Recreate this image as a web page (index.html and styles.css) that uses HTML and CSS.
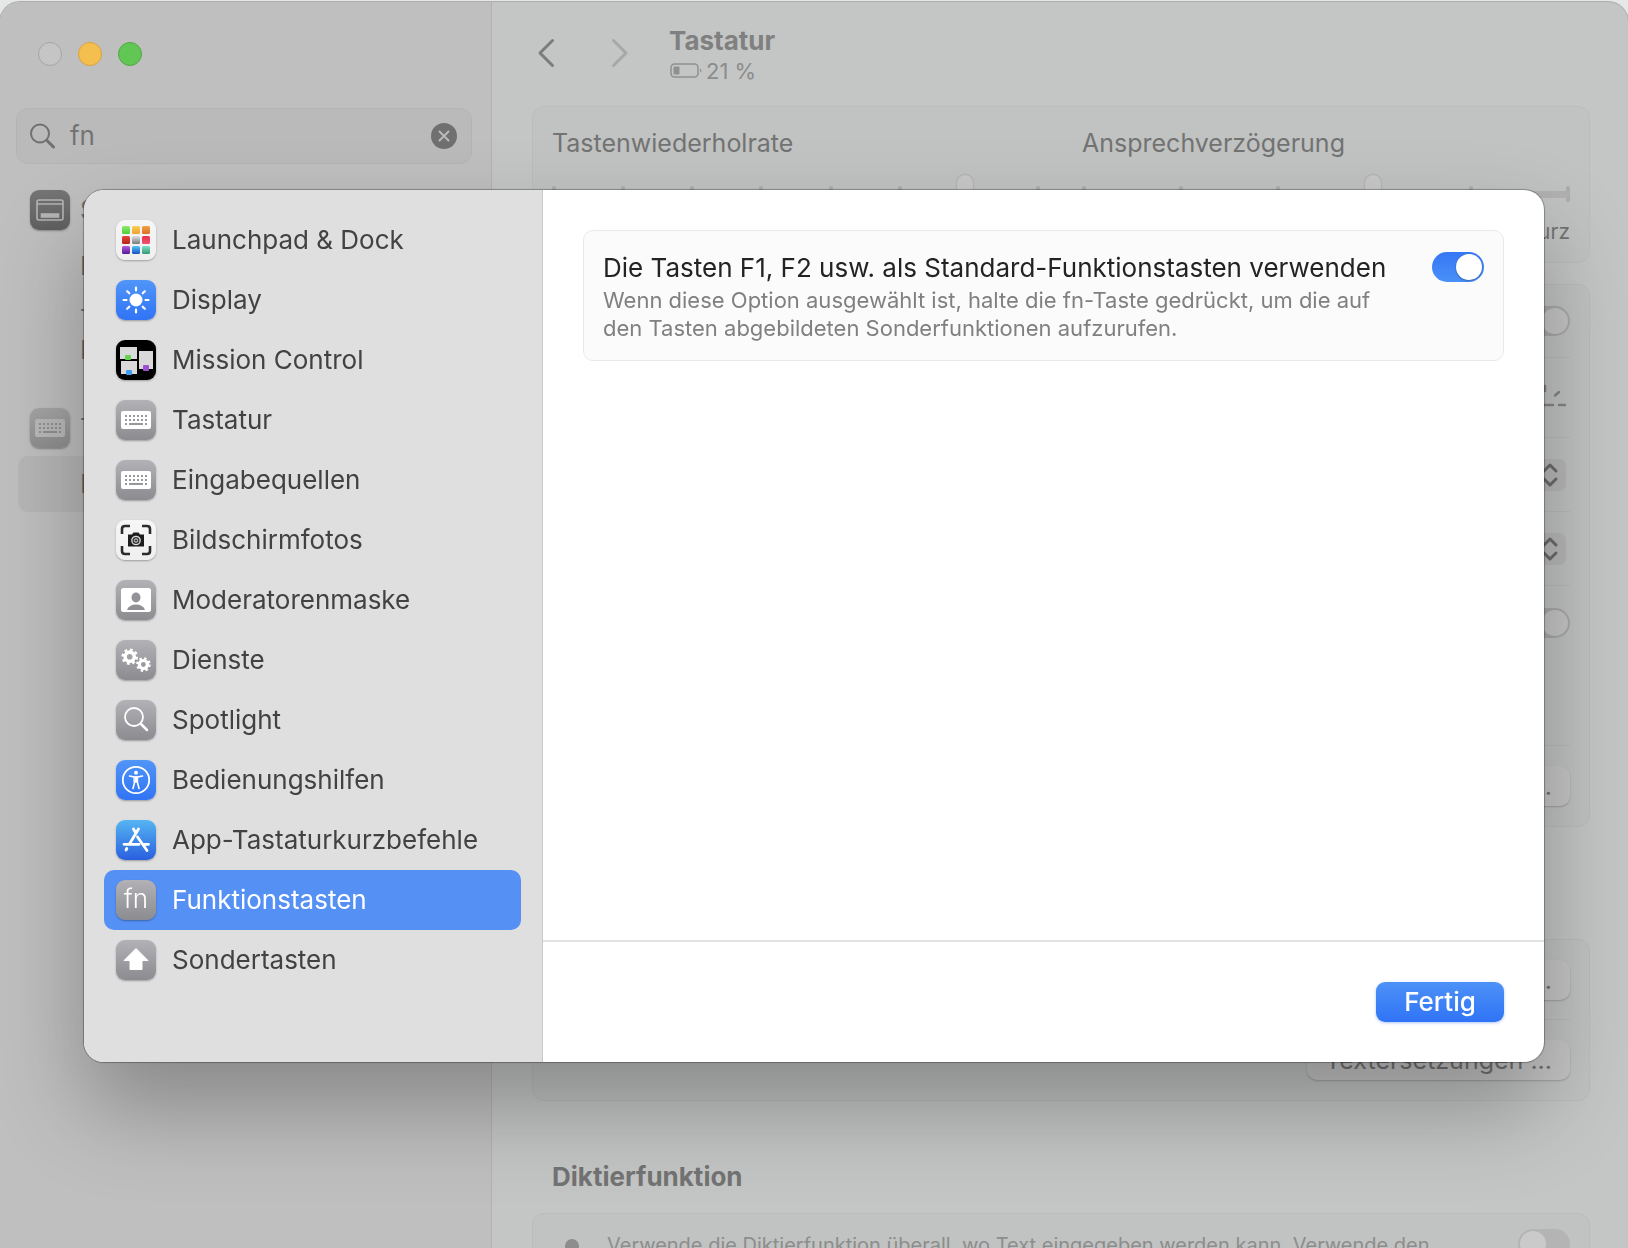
FILE: index.html
```html
<!DOCTYPE html>
<html lang="de">
<head>
    <meta charset="UTF-8">
    <meta name="viewport" content="width=device-width, initial-scale=1.0">
    <title>Tastatur</title>
    <link rel="stylesheet" href="styles.css">
</head>
<body>
    <div class="window">
        <!-- Seitenleiste -->
        <aside class="sidebar">
            <div class="lights">
                <button class="light" aria-label="Schließen"></button>
                <button class="light yellow" aria-label="Minimieren"></button>
                <button class="light green" aria-label="Vollbild"></button>
            </div>
            <div class="search">
                <svg width="26" height="26" viewBox="0 0 26 26" fill="none" stroke="#707070" stroke-width="2" stroke-linecap="round"><circle cx="10" cy="10.500" r="9"/><path d="M17 17.500L23.500 24" stroke-width="3"/></svg>
                <input type="text" value="fn" aria-label="Suchen">
                <button class="clear" aria-label="Suche löschen">
                    <svg width="26" height="26" viewBox="0 0 26 26"><circle cx="13" cy="13" r="13" fill="#707070"/><path d="M8.500 8.500L17.500 17.500M17.500 8.500L8.500 17.500" stroke="#bababa" stroke-width="2" stroke-linecap="round"/></svg>
                </button>
            </div>
            <nav class="results">
                <a class="result" href="#">
                    <span class="tile dark"><svg viewBox="0 0 40 40" fill="none" stroke="#b5b5b5" stroke-width="1.600"><rect x="7" y="10" width="26" height="20" rx="2"/><path d="M7 14H33"/><rect x="11.500" y="24" width="17" height="3" fill="#b5b5b5"/></svg></span>
                    Schreibtisch &amp; Dock
                </a>
                <a class="result sub" href="#">Launchpad öffnen</a>
                <a class="result sub two" href="#">Titelleiste eines<br>Fensters doppelklicken</a>
                <a class="result group" href="#">
                    <span class="tile dim"><svg viewBox="0 0 40 40"><rect x="5" y="11" width="30" height="18" rx="2" fill="#b9b9b9"/><path d="M9 16H32M9 20H32" stroke="#8f8f90" stroke-width="2" stroke-dasharray="2 2"/><path d="M9 24H11M13 24H27M29 24H31" stroke="#8f8f90" stroke-width="2"/></svg></span>
                    Tastatur
                </a>
                <a class="result sub current" href="#">Funktionstasten</a>
            </nav>
        </aside>

        <!-- Einstellungen Tastatur -->
        <main class="content">
            <header class="toolbar">
                <button class="nav" aria-label="Zurück"><svg width="18" height="30" viewBox="0 0 18 30" fill="none" stroke="#7c7c7c" stroke-width="3" stroke-linecap="round" stroke-linejoin="round"><path d="M15.500 2.500L3 15L15.500 27.500"/></svg></button>
                <button class="nav" aria-label="Vorwärts"><svg width="18" height="30" viewBox="0 0 18 30" fill="none" stroke="#a6a7a6" stroke-width="3" stroke-linecap="round" stroke-linejoin="round"><path d="M2.500 2.500L15 15L2.500 27.500"/></svg></button>
                <div class="heading">
                    <h1>Tastatur</h1>
                    <p><svg width="34" height="16" viewBox="0 0 34 16"><rect x="1" y="1" width="27" height="13" rx="3.500" fill="none" stroke="#8f908f" stroke-width="1.500"/><rect x="3.500" y="3.500" width="6" height="8" rx="1" fill="#8f908f"/><path d="M30 5.500Q33 7.500 30 9.500Z" fill="#8f908f"/></svg>21 %</p>
                </div>
            </header>

            <section class="card sliders">
                <div class="slider">
                    <label for="repeat">Tastenwiederholrate</label>
                    <div class="track">
                        <div class="ticks"><i></i><i></i><i></i><i></i><i></i><i></i><i></i><i></i></div>
                        <input type="range" id="repeat" min="0" max="7" value="6">
                    </div>
                    <div class="ends"><span>Langsam</span><span>Schnell</span></div>
                </div>
                <div class="slider">
                    <label for="delay">Ansprechverzögerung</label>
                    <div class="track">
                        <div class="ticks"><i></i><i></i><i></i><i></i><i></i><i></i></div>
                        <input type="range" id="delay" min="0" max="5" value="3">
                    </div>
                    <div class="ends"><span>Lang</span><span>Kurz</span></div>
                </div>
            </section>

            <section class="card options">
                <div class="row">
                    <label for="auto">Tastaturhelligkeit anpassen</label>
                    <input type="checkbox" class="switch off" id="auto">
                </div>
                <div class="row tall">
                    <span>Tastaturhelligkeit</span>
                    <svg class="glow" width="40" height="32" viewBox="0 0 40 32" stroke="#858685" stroke-width="2.500" stroke-linecap="round"><path d="M3 23H10M13 23H23M29 23H35M15 4V9M5 10L8 13M29 10L25 13.500"/></svg>
                </div>
                <div class="row">
                    <label for="inactive">Bei Inaktivität ausschalten</label>
                    <span class="popup"><select id="inactive"><option>Nie</option></select><svg viewBox="0 0 32 32" fill="none" stroke="#6c6c6c" stroke-width="3" stroke-linecap="round" stroke-linejoin="round"><path d="M10 12L16 6L22 12M10 20L16 26L22 20"/></svg></span>
                </div>
                <div class="row">
                    <label for="globe">Drücken der fn-Taste</label>
                    <span class="popup"><select id="globe"><option>Keine Aktion</option></select><svg viewBox="0 0 32 32" fill="none" stroke="#6c6c6c" stroke-width="3" stroke-linecap="round" stroke-linejoin="round"><path d="M10 12L16 6L22 12M10 20L16 26L22 20"/></svg></span>
                </div>
                <div class="row double">
                    <label for="tabnav">Tastaturnavigation</label>
                    <input type="checkbox" class="switch off" id="tabnav">
                </div>
                <div class="row tall">
                    <span></span>
                    <button class="plain">Tastaturkurzbefehle ...</button>
                </div>
            </section>

            <h2>Texteingabe</h2>
            <section class="card options">
                <div class="row tall">
                    <span>Eingabequellen</span>
                    <button class="plain">Bearbeiten ...</button>
                </div>
                <div class="row tall">
                    <span></span>
                    <button class="plain">Textersetzungen ...</button>
                </div>
            </section>

            <h2>Diktierfunktion</h2>
            <section class="card dictation">
                <svg width="40" height="44" viewBox="0 0 40 44"><rect x="13" y="10" width="14" height="24" rx="7" fill="#8c8d8c"/></svg>
                <label for="dictation">Verwende die Diktierfunktion überall, wo Text eingegeben werden kann. Verwende den</label>
                <input type="checkbox" class="switch off" id="dictation">
            </section>
        </main>
    </div>

    <!-- Dialog Kurzbefehle -->
    <div class="dialog" role="dialog" aria-label="Tastaturkurzbefehle">
        <nav class="list">
            <a class="item" href="#">
                <span class="tile white"><svg viewBox="0 0 40 40">
                    <defs>
                        <linearGradient id="g1" x2="0" y2="1"><stop stop-color="#8eea70"/><stop offset="1" stop-color="#52cc35"/></linearGradient>
                        <linearGradient id="g2" x2="0" y2="1"><stop stop-color="#f9d052"/><stop offset="1" stop-color="#eda22e"/></linearGradient>
                        <linearGradient id="g3" x2="0" y2="1"><stop stop-color="#f1a445"/><stop offset="1" stop-color="#dc6e25"/></linearGradient>
                        <linearGradient id="g4" x2="0" y2="1"><stop stop-color="#e6453a"/><stop offset="1" stop-color="#b6241c"/></linearGradient>
                        <linearGradient id="g5" x2="0" y2="1"><stop stop-color="#dde2e6"/><stop offset="1" stop-color="#777a7d"/></linearGradient>
                        <linearGradient id="g6" x2="0" y2="1"><stop stop-color="#e9304e"/><stop offset="1" stop-color="#ef5470"/></linearGradient>
                        <linearGradient id="g7" x2="0" y2="1"><stop stop-color="#b45be0"/><stop offset="1" stop-color="#551a96"/></linearGradient>
                        <linearGradient id="g8" x2="0" y2="1"><stop stop-color="#4fc8fa"/><stop offset="1" stop-color="#1a4fc0"/></linearGradient>
                        <linearGradient id="g9" x2="0" y2="1"><stop stop-color="#79e3c6"/><stop offset="1" stop-color="#399878"/></linearGradient>
                    </defs>
                    <rect x="6" y="6" width="8" height="8" rx="1.500" fill="url(#g1)"/><rect x="16" y="6" width="8" height="8" rx="1.500" fill="url(#g2)"/><rect x="26" y="6" width="8" height="8" rx="1.500" fill="url(#g3)"/>
                    <rect x="6" y="16" width="8" height="8" rx="1.500" fill="url(#g4)"/><rect x="16" y="16" width="8" height="8" rx="1.500" fill="url(#g5)"/><rect x="26" y="16" width="8" height="8" rx="1.500" fill="url(#g6)"/>
                    <rect x="6" y="26" width="8" height="8" rx="1.500" fill="url(#g7)"/><rect x="16" y="26" width="8" height="8" rx="1.500" fill="url(#g8)"/><rect x="26" y="26" width="8" height="8" rx="1.500" fill="url(#g9)"/>
                </svg></span>
                Launchpad &amp; Dock
            </a>
            <a class="item" href="#">
                <span class="tile blue"><svg viewBox="0 0 40 40"><circle cx="20" cy="20" r="6.500" fill="#fff"/><path d="M20 7.500V10.500M20 29.500V32.500M7.500 20H10.500M29.500 20H32.500M11.200 11.200L13.300 13.300M26.700 26.700L28.800 28.800M28.800 11.200L26.700 13.300M13.300 26.700L11.200 28.800" stroke="#fff" stroke-width="2.200" stroke-linecap="round"/></svg></span>
                Display
            </a>
            <a class="item" href="#">
                <span class="tile black"><svg viewBox="0 0 40 40"><rect x="4" y="7" width="17" height="12" fill="#d9d9d9"/><rect x="5" y="21" width="16" height="13" fill="#d9d9d9"/><rect x="23" y="11" width="14" height="18" fill="#d9d9d9"/><rect x="9" y="15" width="6" height="5" rx="1" fill="#63d44b"/><rect x="10" y="30" width="6" height="5" rx="1" fill="#3f9cf0"/><rect x="27" y="25" width="6" height="6" rx="1" fill="#9a50d0"/></svg></span>
                Mission Control
            </a>
            <a class="item" href="#">
                <span class="tile"><svg viewBox="0 0 40 40"><rect x="5" y="11" width="30" height="18" rx="2" fill="#fff"/><path d="M9 16H32M9 20H32" stroke="#99999d" stroke-width="2" stroke-dasharray="2 2"/><path d="M9 24H11M13 24H27M29 24H31" stroke="#99999d" stroke-width="2"/></svg></span>
                Tastatur
            </a>
            <a class="item" href="#">
                <span class="tile"><svg viewBox="0 0 40 40"><rect x="5" y="11" width="30" height="18" rx="2" fill="#fff"/><path d="M9 16H32M9 20H32" stroke="#99999d" stroke-width="2" stroke-dasharray="2 2"/><path d="M9 24H11M13 24H27M29 24H31" stroke="#99999d" stroke-width="2"/></svg></span>
                Eingabequellen
            </a>
            <a class="item" href="#">
                <span class="tile white"><svg viewBox="0 0 40 40"><path d="M6 14V9Q6 6 9 6H14M26 6H31Q34 6 34 9V14M34 26V31Q34 34 31 34H26M14 34H9Q6 34 6 31V26" fill="none" stroke="#2b2b2b" stroke-width="2.600"/><path d="M12 14.500H16L17.500 12.500H22.500L24 14.500H28V26.500H12Z" fill="#1c1c1c"/><circle cx="20" cy="20.500" r="4.200" fill="#333" stroke="#ddd" stroke-width="1.300"/><circle cx="20" cy="20.500" r="1.700" fill="none" stroke="#ddd"/></svg></span>
                Bildschirmfotos
            </a>
            <a class="item" href="#">
                <span class="tile"><svg viewBox="0 0 40 40"><rect x="5" y="8" width="30" height="24" rx="2.500" fill="#fff"/><ellipse cx="20" cy="17.500" rx="4.500" ry="5" fill="#939397"/><path d="M11 30Q13 24.500 20 24.500T29 30Z" fill="#919195"/></svg></span>
                Moderatorenmaske
            </a>
            <a class="item" href="#">
                <span class="tile"><svg viewBox="0 0 40 40" fill="none" stroke="#fff"><circle cx="13.700" cy="16.700" r="4.600" stroke-width="3.600"/><circle cx="13.700" cy="16.700" r="7" stroke-width="2.600" stroke-dasharray="2.750 2.750"/><circle cx="27.400" cy="24.500" r="4" stroke-width="3.200"/><circle cx="27.400" cy="24.500" r="6.100" stroke-width="2.400" stroke-dasharray="2.400 2.390"/></svg></span>
                Dienste
            </a>
            <a class="item" href="#">
                <span class="tile"><svg viewBox="0 0 40 40" fill="none" stroke="#fff" stroke-linecap="round"><circle cx="18" cy="17" r="9" stroke-width="1.800"/><path d="M25 24L31 30" stroke-width="2.500"/></svg></span>
                Spotlight
            </a>
            <a class="item" href="#">
                <span class="tile blue"><svg viewBox="0 0 40 40" fill="none" stroke="#fff" stroke-linecap="round" stroke-linejoin="round"><circle cx="20" cy="20" r="13.200" stroke-width="1.800"/><circle cx="20" cy="12.800" r="2" fill="#fff" stroke="none"/><path d="M13.500 16L18.500 17H21.500L26.500 16" stroke-width="1.600"/><path d="M18.300 17H21.700V22H18.300Z" fill="#fff" stroke-width="1"/><path d="M18.800 21.500L17 28.500M21.200 21.500L23 28.500" stroke-width="1.600"/></svg></span>
                Bedienungshilfen
            </a>
            <a class="item" href="#">
                <span class="tile store"><svg viewBox="0 0 40 40" fill="none" stroke="#fff" stroke-width="2.800" stroke-linecap="round"><path d="M22.500 9L13.500 24M17.500 9L19.500 12.500M21.500 17L31 30.500M8 24.300H23M28.500 24.300H32.500M10.800 28.500L10 30"/></svg></span>
                App-Tastaturkurzbefehle
            </a>
            <a class="item selected" href="#">
                <span class="tile fn">fn</span>
                Funktionstasten
            </a>
            <a class="item" href="#">
                <span class="tile"><svg viewBox="0 0 40 40"><path d="M20 8.500L32 20.500H26V29.500H14V20.500H8Z" fill="#fff" stroke="#fff" stroke-linejoin="round"/></svg></span>
                Sondertasten
            </a>
        </nav>
        <div class="pane">
            <div class="pane-body">
                <div class="setting">
                    <div class="setting-text">
                        <label for="fkeys">Die Tasten F1, F2 usw. als Standard-Funktionstasten verwenden</label>
                        <p>Wenn diese Option ausgewählt ist, halte die fn-Taste gedrückt, um die auf den Tasten abgebildeten Sonderfunktionen aufzurufen.</p>
                    </div>
                    <input type="checkbox" class="switch" id="fkeys" checked>
                </div>
            </div>
            <footer class="pane-footer">
                <button class="primary">Fertig</button>
            </footer>
        </div>
    </div>
</body>
</html>
```

FILE: styles.css
```css
* { box-sizing: border-box; }
body { margin: 0; padding-top: 2px; height: 100vh; overflow: hidden; background: #e6e8e7; font-family: Inter, "Liberation Sans", sans-serif; font-size: 25px; line-height: 32px; color: #737373; }
h1, h2, p { margin: 0; }
a { color: inherit; text-decoration: none; }
button, input, select { font: inherit; color: inherit; border: 0; margin: 0; padding: 0; background: none; }
svg { display: block; flex: none; }

.window { display: flex; height: 100%; overflow: hidden; border-radius: 20px 20px 0 0; background: #c4c6c5; box-shadow: 0 0 0 1px #adadad; }

/* Seitenleiste */
.sidebar { flex: none; width: 492px; padding: 40px 19px 0 16px; background: #bfbfbf; border-right: 1px solid #b2b2b2; }
.lights { display: flex; gap: 16px; padding-left: 22px; }
.light { width: 24px; height: 24px; border-radius: 50%; background: #c5c5c5; border: 1px solid #a5a5a5; }
.light.yellow { background: #f5bf4f; border-color: #d9a23d; }
.light.green { background: #62c655; border-color: #4fa944; }
.search { display: flex; align-items: center; gap: 14px; height: 56px; margin-top: 42px; padding: 0 14px 0 13px; border: 1px solid #b4b4b4; border-radius: 12px; background: #bababa; }
.search input { flex: 1; min-width: 0; outline: 0; font-size: 26px; }
.results { display: flex; flex-direction: column; padding: 18px 0 0 2px; white-space: nowrap; }
.result { display: flex; align-items: center; gap: 10px; height: 56px; padding-left: 12px; }
.result.sub { padding-left: 62px; }
.result.two { height: 82px; line-height: 31px; }
.result.group { margin-top: 24px; }
.result.current { border-radius: 10px; background: #b6b6b6; }

.tile { flex: none; width: 40px; height: 40px; border-radius: 9px; background: linear-gradient(#b1b1b6, #8b8b90); box-shadow: 0 1px 2px rgba(0, 0, 0, 0.3); }
.tile.dark { background: linear-gradient(#757575, #606060); }
.tile.dim { background: linear-gradient(#a5a5a5, #8e8e8f); }
.tile.white { background: linear-gradient(#f6f6f6, #efefef); }
.tile.blue { background: linear-gradient(#5095f7, #3074f6); }
.tile.black { background: #000; }
.tile.store { background: linear-gradient(#55b5f2, #2a5fe0); }
.tile.fn { color: #fff; font-weight: 300; line-height: 38px; text-align: center; }

/* Hauptbereich */
.content { flex: 1; min-width: 0; padding: 0 38px 0 40px; }
.toolbar { display: flex; align-items: flex-start; height: 104px; padding: 23px 0 0 5px; }
.nav { width: 74px; height: 56px; }
.heading { margin-left: -16px; }
.heading h1 { color: #808080; font-size: 26px; line-height: 32px; }
.heading p { display: flex; align-items: center; gap: 2px; color: #8b8c8b; font-size: 22px; line-height: 28px; }
.heading p svg { margin-left: 1px; }
.content h2 { margin: 60px 20px 20px; font-size: 26px; line-height: 32px; }
.card { border: 1px solid #bbbcbb; border-radius: 12px; background: #c1c3c2; }
.card + .card { margin-top: 21px; }
.sliders { display: grid; grid-template-columns: 1fr 1fr; gap: 42px; padding: 20px 19px 16px; }
.slider label { display: block; }
.track { position: relative; height: 42px; margin: 14px 0 3px; }
.ticks { position: absolute; inset: 13px 0; display: flex; justify-content: space-between; }
.ticks i { width: 4px; border-radius: 2px; background: #acacac; }
.track input { position: absolute; inset: 0; width: 100%; height: 42px; appearance: none; }
.track input::-webkit-slider-runnable-track { height: 7px; border-radius: 4px; background: #b1b1b1; }
.track input::-webkit-slider-thumb { appearance: none; width: 16px; height: 40px; margin-top: -16px; border-radius: 8px; background: #c8c8c8; box-shadow: 0 0 2px rgba(0, 0, 0, 0.25); }
.ends { display: flex; justify-content: space-between; font-size: 21px; line-height: 28px; }

.options { padding: 0 19px; }
.row { display: flex; align-items: center; justify-content: space-between; height: 74px; border-bottom: 1px solid #b9bab9; }
.row:first-child { height: 73px; }
.row.tall { height: 80px; }
.row.double { height: 160px; align-items: flex-start; padding-top: 22px; }
.row:last-child { border-bottom: 0; }
.popup { position: relative; margin-right: 4px; }
.popup select { height: 32px; padding-right: 40px; appearance: none; }
.popup svg { position: absolute; right: 0; top: 0; width: 32px; height: 32px; border-radius: 7px; background: #b8b8b8; }
.plain { height: 40px; padding: 0 18px; border-radius: 10px; background: #c6c6c6; box-shadow: 0 1px 2px rgba(0, 0, 0, 0.2); }
.dictation { display: flex; align-items: flex-start; height: 100px; padding: 15px 19px; font-size: 20px; color: #8c8d8c; white-space: nowrap; }
.dictation label { flex: 1; min-width: 0; padding-left: 15px; }

.switch { flex: none; width: 52px; height: 30px; padding: 2px; border-radius: 15px; appearance: none; background: linear-gradient(#3577f5, #4a90f8); }
.switch::before { content: ""; display: block; width: 26px; height: 26px; margin-left: auto; border-radius: 50%; background: #fff; box-shadow: 0 1px 2px rgba(0, 0, 0, 0.3); }
.switch.off { background: #a9a9a9; }
.switch.off::before { background: #c6c6c6; box-shadow: none; }
.dictation .switch { background: #b3b4b3; }
.dictation .switch::before { margin-left: 0; background: #cacaca; }

/* Dialog */
.dialog { position: fixed; inset: 190px 84px 186px; display: flex; overflow: hidden; border-radius: 20px; background: #fff; box-shadow: 0 0 1px 1px rgba(0, 0, 0, 0.3), 0 46px 90px rgba(0, 0, 0, 0.29); font-size: 26px; }
.list { flex: none; width: 459px; padding: 20px 21px 20px 20px; background: #dfdfdf; border-right: 1px solid #c9c9c9; color: #424242; }
.item { display: flex; align-items: center; gap: 16px; height: 60px; padding-left: 12px; border-radius: 10px; }
.item.selected { background: #5590f5; color: #fff; }
.pane { flex: 1; display: flex; flex-direction: column; min-width: 0; }
.pane-body { flex: 1; padding: 40px; }
.setting { display: flex; align-items: flex-start; justify-content: space-between; padding: 21px 19px 18px; border: 1px solid #e9e9e9; border-radius: 10px; background: #fbfbfb; }
.setting-text { width: 800px; color: #232323; }
.setting p { margin-top: 2px; color: #808080; font-size: 22px; line-height: 28px; }
.pane-footer { display: flex; justify-content: flex-end; padding: 40px; border-top: 2px solid #e3e3e3; }
.primary { width: 128px; height: 40px; border-radius: 9px; background: linear-gradient(#4d91f8, #3074f6); box-shadow: 0 1px 3px rgba(48, 116, 246, 0.4); color: #fff; font-weight: 500; }
```
